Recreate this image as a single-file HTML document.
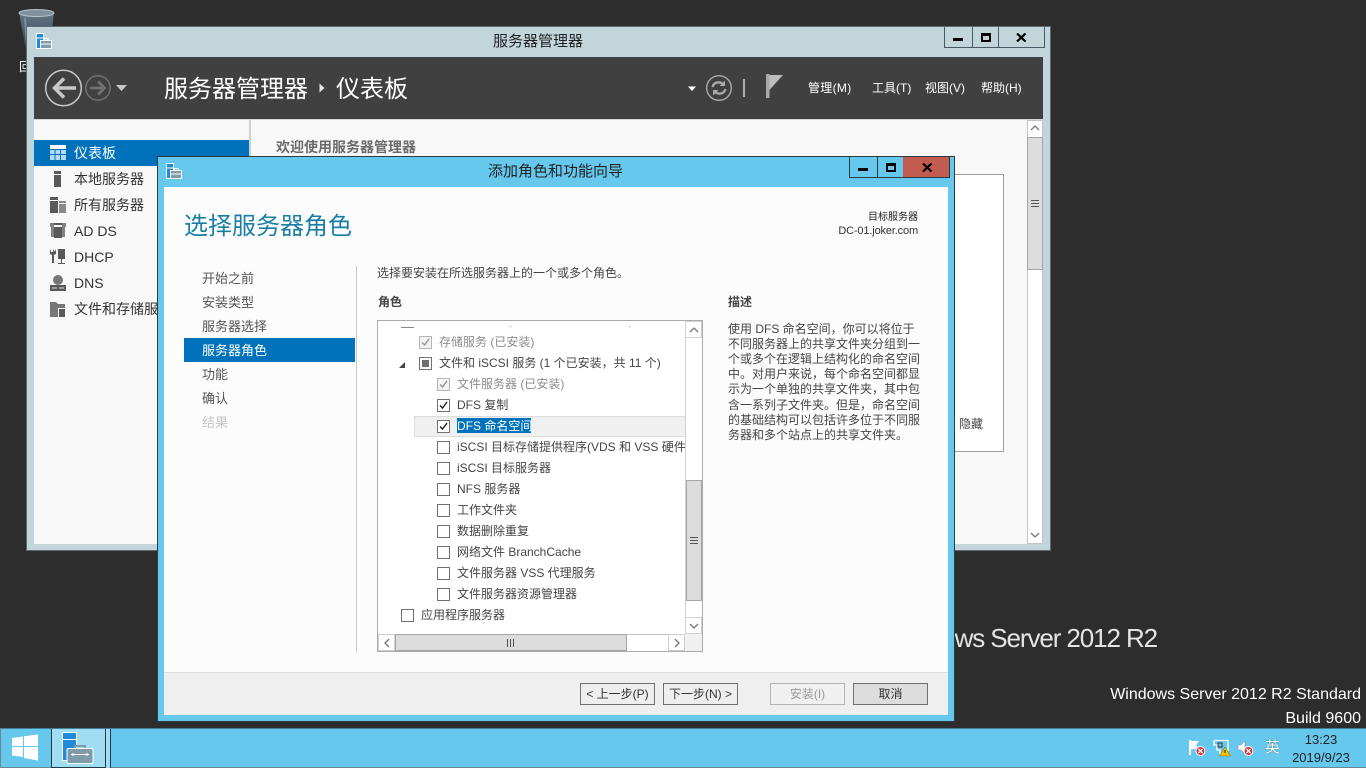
<!DOCTYPE html>
<html lang="zh"><head><meta charset="utf-8"><title>服务器管理器</title>
<style>
*{box-sizing:border-box}
html,body{margin:0;padding:0;width:1366px;height:768px;overflow:hidden;background:#2d2d2d}
body{position:relative;font-family:"Liberation Sans","Noto Sans CJK SC",sans-serif;font-size:12px;color:#333}
.a{position:absolute}
.t{position:absolute;white-space:nowrap;line-height:20px;height:20px}
.nav{font-size:13px;color:#555;left:202px}
.side{font-size:14px;color:#333;left:74px}
.menu{font-size:12px;color:#fff;top:78px}
.cb{position:absolute;width:13px;height:13px;background:#fff;border:1px solid #707070}
.cb.dis{border-color:#b5b5b5;background:#f4f4f4}
.cb svg{position:absolute;left:0;top:0}
.r{position:absolute;white-space:nowrap;font-size:12px;color:#444;line-height:20px;height:20px}
.g{color:#8c8c8c}
.btn{position:absolute;top:683px;height:22px;width:75px;border:1px solid #707070;background:#eee;text-align:center;line-height:21px;font-size:12px;color:#333}
.wb{position:absolute;border:1px solid #4a5a64;border-top:0}
.sb{position:absolute;background:#dcdcdc;border:1px solid #a6a6a6}
.d{position:absolute;left:728px;white-space:nowrap;font-size:12px;color:#444;line-height:15px;height:15px}
</style></head><body>

<!-- recycle bin -->
<svg class="a" style="left:17px;top:8px" width="40" height="52" viewBox="0 0 40 52"><defs><linearGradient id="bin" x1="0" y1="0" x2="0" y2="1"><stop offset="0" stop-color="#66798a"/><stop offset="1" stop-color="#2f3b46"/></linearGradient></defs><path d="M2 4 L37 4 L33 40 L9 43Z" fill="url(#bin)"/><ellipse cx="19.500" cy="5" rx="17.500" ry="3.500" fill="#7f919e" stroke="#b9c3ca"/><path d="M8 10 L10 38" stroke="#7d8f9e" stroke-width="2"/></svg>
<div class="t" style="left:19px;top:57px;color:#fff;font-size:12px">回</div>

<!-- watermark -->
<div class="t" style="right:209px;top:622px;height:32px;line-height:32px;color:#e4e4e4;font-size:26px;letter-spacing:-1.100px">Windows Server 2012 R2</div>
<div class="t" style="right:5px;top:685px;color:#fff;font-size:16px">Windows Server 2012 R2 Standard</div>
<div class="t" style="right:5px;top:709px;color:#fff;font-size:16px">Build 9600</div>

<!-- server manager window -->
<div class="a" style="left:26px;top:26px;width:1025px;height:525px;background:#c2d5db;border:1px solid #5e6b73"></div>
<svg class="a" style="left:36px;top:33px" width="17" height="17" viewBox="0 0 17 17"><rect x="0.500" y="0.500" width="7" height="15" fill="#1f8ad8" stroke="#fff"/><path d="M1 5H7" stroke="#fff"/><rect x="4.500" y="7.500" width="11" height="8" fill="#7f9bac" stroke="#fff"/><path d="M8 7V5.500H12V7M5 11H15" stroke="#fff" fill="none"/></svg>
<div class="t" style="left:493px;top:32px;font-size:15px;color:#222">服务器管理器</div>
<div class="wb" style="left:944px;top:27px;width:29px;height:21px"></div>
<div class="wb" style="left:972px;top:27px;width:27px;height:21px"></div>
<div class="wb" style="left:998px;top:27px;width:47px;height:21px"></div>
<div class="a" style="left:953px;top:38px;width:10px;height:3px;background:#000"></div>
<div class="a" style="left:981px;top:33px;width:10px;height:9px;border:2px solid #000;border-top-width:3px"></div>
<svg class="a" style="left:1016px;top:33px" width="11" height="9" viewBox="0 0 11 9"><path d="M1 0.500L9.500 8.500M9.500 0.500L1 8.500" stroke="#000" stroke-width="2.200"/></svg>

<!-- dark header -->
<div class="a" style="left:34px;top:57px;width:1009px;height:62px;background:#404040"></div>
<div class="a" style="left:34px;top:119px;width:1009px;height:1px;background:#d8d8d8"></div>
<svg class="a" style="left:44px;top:68px" width="40" height="40" viewBox="0 0 40 40"><circle cx="19.500" cy="20" r="17.800" fill="none" stroke="#c8c8c8" stroke-width="1.500"/><path d="M32 20H11M20 10.500L10.500 20L20 29.500" fill="none" stroke="#c8c8c8" stroke-width="3.500"/></svg>
<svg class="a" style="left:84px;top:74px" width="28" height="28" viewBox="0 0 28 28"><circle cx="14" cy="14" r="12.200" fill="none" stroke="#707070" stroke-width="1.500"/><path d="M6 14H20M14 7.500L20.500 14L14 20.500" fill="none" stroke="#707070" stroke-width="2.800"/></svg>
<svg class="a" style="left:116px;top:84px" width="12" height="8"><path d="M0 1H11L5.500 7Z" fill="#c8c8c8"/></svg>
<div class="t" style="left:164px;top:73px;height:34px;line-height:34px;font-size:24px;color:#fff">服务器管理器</div>
<svg class="a" style="left:318px;top:83px" width="8" height="10"><path d="M1.500 0.500L6.500 5L1.500 9.500Z" fill="#e8e8e8"/></svg>
<div class="t" style="left:336px;top:73px;height:34px;line-height:34px;font-size:24px;color:#fff">仪表板</div>
<svg class="a" style="left:688px;top:86px" width="9" height="6"><path d="M0 0.500H8L4 5Z" fill="#fff"/></svg>
<svg class="a" style="left:705px;top:74px" width="28" height="28" viewBox="0 0 28 28"><circle cx="14" cy="14" r="12.300" fill="none" stroke="#aaa" stroke-width="1.400"/><path d="M7.500 13C8.500 9 12.500 7.500 16 8.800L18 10M20.500 15C19.500 19 15.500 20.500 12 19.200L10 18" fill="none" stroke="#aaa" stroke-width="2.300"/><path d="M20 6.500V12H14.500ZM8 21.500V16H13.500Z" fill="#aaa"/></svg>
<div class="a" style="left:743px;top:79px;width:2px;height:18px;background:#b0b0b0"></div>
<svg class="a" style="left:766px;top:74px" width="18" height="25" viewBox="0 0 18 25"><rect x="0" y="0" width="3.500" height="24" fill="#a8a8a8"/><path d="M3.500 1H17L3.500 16Z" fill="#bdbdbd"/></svg>
<div class="t menu" style="left:808px;letter-spacing:.3px">管理(M)</div>
<div class="t menu" style="left:872px">工具(T)</div>
<div class="t menu" style="left:925px">视图(V)</div>
<div class="t menu" style="left:981px">帮助(H)</div>

<!-- back content -->
<div class="a" style="left:34px;top:120px;width:1009px;height:424px;background:#f8f8f8"></div>
<div class="a" style="left:249px;top:120px;width:2px;height:424px;background:#d0d0d0"></div>
<div class="a" style="left:34px;top:140px;width:215px;height:26px;background:#0072bc"></div>
<svg class="a" style="left:50px;top:144px" width="16" height="16" viewBox="0 0 16 16"><rect x="0" y="1" width="16" height="4" fill="#fff"/><path d="M0 6H4.500V10H0ZM5.500 6H10V10H5.500ZM11 6H16V10H11ZM0 11H4.500V16H0ZM5.500 11H10V16H5.500ZM11 11H16V16H11Z" fill="#b6d9ef"/></svg>
<div class="t side" style="top:143px;color:#fff">仪表板</div>
<svg class="a" style="left:50px;top:170px" width="16" height="18" viewBox="0 0 16 18"><path d="M4 1H11V4H4ZM4 5H11V17H4Z" fill="#595959"/></svg>
<div class="t side" style="top:169px">本地服务器</div>
<svg class="a" style="left:50px;top:196px" width="16" height="18" viewBox="0 0 16 18"><path d="M0 1H8V4H0ZM0 5H8V17H0Z" fill="#595959"/><path d="M9 5H16V7H9ZM9 8H16V17H9Z" fill="#8a8a8a"/></svg>
<div class="t side" style="top:195px">所有服务器</div>
<svg class="a" style="left:50px;top:222px" width="16" height="18" viewBox="0 0 16 18"><path d="M0 1H4V15H1V5H0ZM12 1H16V5H15V15H12Z" fill="#808080"/><path d="M4 1H12V3H4ZM4 5H12V16H4Z" fill="#595959"/></svg>
<div class="t side" style="top:221px">AD DS</div>
<svg class="a" style="left:50px;top:248px" width="16" height="18" viewBox="0 0 16 18"><path d="M3 1V4H1V1L0 3V6L2 7V15H4V7L6 6V3L5 1V4" fill="#595959"/><path d="M8 1H15V11H8ZM11 11H12V15H15V16H8V15H11Z" fill="#595959"/></svg>
<div class="t side" style="top:247px">DHCP</div>
<svg class="a" style="left:50px;top:274px" width="16" height="18" viewBox="0 0 16 18"><circle cx="8" cy="6" r="5" fill="#777"/><path d="M0 11H16V17H0Z" fill="#595959"/><path d="M2 14H7M9 14H14" stroke="#ddd"/></svg>
<div class="t side" style="top:273px">DNS</div>
<svg class="a" style="left:50px;top:300px" width="16" height="18" viewBox="0 0 16 18"><path d="M0 2H6L8 4H15V8H8V17H0Z" fill="#777"/><path d="M9 9H15V17H9Z" fill="#595959"/></svg>
<div class="t side" style="top:299px">文件和存储服</div>
<div class="t" style="left:276px;top:137px;font-size:14px;color:#6b6b6b;font-weight:bold">欢迎使用服务器管理器</div>
<div class="a" style="left:940px;top:174px;width:64px;height:278px;background:#fff;border:1px solid #a0a0a0;border-left:0"></div>
<div class="t" style="left:959px;top:414px;color:#444">隐藏</div>

<!-- back scrollbar -->
<div class="a" style="left:1027px;top:120px;width:16px;height:424px;background:#fff;border:1px solid #c4c4c4"></div>
<div class="sb" style="left:1027px;top:137px;width:16px;height:133px"></div>
<svg class="a" style="left:1030px;top:124px" width="10" height="8"><path d="M1 6L5 2L9 6" fill="none" stroke="#777" stroke-width="1.300"/></svg>
<svg class="a" style="left:1030px;top:531px" width="10" height="8"><path d="M1 2L5 6L9 2" fill="none" stroke="#777" stroke-width="1.300"/></svg>
<div class="a" style="left:1031px;top:200px;width:8px;height:7px;border-top:1px solid #555;border-bottom:1px solid #555"></div>
<div class="a" style="left:1031px;top:203px;width:8px;height:1px;background:#555"></div>

<!-- dialog -->
<div class="a" style="left:157px;top:156px;width:798px;height:566px;background:#65c8ec;border:1px solid #2b3a44"></div>
<svg class="a" style="left:166px;top:163px" width="17" height="17" viewBox="0 0 17 17"><rect x="0.500" y="0.500" width="7" height="15" fill="#1f8ad8" stroke="#fff"/><path d="M1 5H7" stroke="#fff"/><rect x="4.500" y="7.500" width="11" height="8" fill="#7f9bac" stroke="#fff"/><path d="M8 7V5.500H12V7M5 11H15" stroke="#fff" fill="none"/></svg>
<div class="t" style="left:488px;top:162px;font-size:15px;color:#222">添加角色和功能向导</div>
<div class="a" style="left:849px;top:157px;width:29px;height:21px;border:1px solid #2b3a44;border-top:0"></div>
<div class="a" style="left:877px;top:157px;width:27px;height:21px;border:1px solid #2b3a44;border-top:0"></div>
<div class="a" style="left:903px;top:157px;width:47px;height:21px;background:#c25b50;border:1px solid #2b3a44;border-top:0;border-left:0"></div>
<div class="a" style="left:858px;top:168px;width:10px;height:3px;background:#000"></div>
<div class="a" style="left:886px;top:163px;width:10px;height:9px;border:2px solid #000;border-top-width:3px"></div>
<svg class="a" style="left:922px;top:163px" width="11" height="9" viewBox="0 0 11 9"><path d="M1 0.500L9.500 8.500M9.500 0.500L1 8.500" stroke="#000" stroke-width="2.200"/></svg>

<div class="a" style="left:164px;top:187px;width:784px;height:528px;background:#fcfcfc"></div>
<div class="a" style="left:164px;top:672px;width:784px;height:43px;background:#efefef;border-top:1px solid #dcdcdc"></div>
<div class="t" style="left:184px;top:210px;height:34px;line-height:34px;font-size:24px;color:#1a7fa5">选择服务器角色</div>
<div class="t" style="right:448px;top:208px;font-size:10px;color:#222">目标服务器</div>
<div class="t" style="right:448px;top:221px;font-size:11px;letter-spacing:-.15px;color:#333">DC-01.joker.com</div>

<!-- wizard nav -->
<div class="a" style="left:184px;top:338px;width:171px;height:24px;background:#0072bc"></div>
<div class="t nav" style="top:269px">开始之前</div>
<div class="t nav" style="top:293px">安装类型</div>
<div class="t nav" style="top:317px">服务器选择</div>
<div class="t nav" style="top:341px;color:#fff">服务器角色</div>
<div class="t nav" style="top:365px">功能</div>
<div class="t nav" style="top:389px">确认</div>
<div class="t nav" style="top:413px;color:#c4c4c4">结果</div>
<div class="a" style="left:356px;top:266px;width:1px;height:386px;background:#c8c8c8"></div>

<div class="t" style="left:377px;top:263px;color:#444">选择要安装在所选服务器上的一个或多个角色。</div>
<div class="t" style="left:378px;top:292px;color:#444;font-weight:bold">角色</div>
<div class="t" style="left:728px;top:292px;color:#444;font-weight:bold">描述</div>

<!-- list -->
<div class="a" style="left:377px;top:320px;width:326px;height:332px;background:#fff;border:1px solid #ababab"></div>
<div class="a" style="left:401px;top:327px;width:13px;height:1px;background:#888"></div>
<div class="a" style="left:510px;top:326px;width:1px;height:1px;background:#aaa"></div>
<div class="a" style="left:629px;top:326px;width:1px;height:1px;background:#aaa"></div>

<div class="a" style="left:414px;top:416px;width:271px;height:21px;background:#f0f0f0;border:1px solid #dcdcdc;border-right:0"></div>
<div class="a" style="left:457px;top:418px;width:74px;height:15px;background:#0072bc"></div>

<div class="cb dis" style="left:419px;top:336px"><svg width="11" height="11"><path d="M2 5.500L4.500 8L9 2" fill="none" stroke="#9a9a9a" stroke-width="1.500"/></svg></div>
<div class="r g" style="left:439px;top:332px">存储服务 (已安装)</div>
<svg class="a" style="left:398px;top:361px" width="8" height="8"><path d="M7 1V7H1Z" fill="#444"/></svg>
<div class="cb" style="left:419px;top:357px"><div class="a" style="left:2px;top:2px;width:7px;height:7px;background:#707070"></div></div>
<div class="r" style="left:439px;top:353px">文件和 iSCSI 服务 (1 个已安装，共 11 个)</div>
<div class="cb dis" style="left:437px;top:378px"><svg width="11" height="11"><path d="M2 5.500L4.500 8L9 2" fill="none" stroke="#9a9a9a" stroke-width="1.500"/></svg></div>
<div class="r g" style="left:457px;top:374px">文件服务器 (已安装)</div>
<div class="cb" style="left:437px;top:399px"><svg width="11" height="11"><path d="M2 5.500L4.500 8L9 2" fill="none" stroke="#222" stroke-width="1.400"/></svg></div>
<div class="r" style="left:457px;top:395px">DFS 复制</div>
<div class="cb" style="left:437px;top:420px"><svg width="11" height="11"><path d="M2 5.500L4.500 8L9 2" fill="none" stroke="#222" stroke-width="1.400"/></svg></div>
<div class="r" style="left:457px;top:416px;color:#fff">DFS 命名空间</div>
<div class="cb" style="left:437px;top:441px"></div>
<div class="r" style="left:457px;top:437px;width:228px;overflow:hidden">iSCSI 目标存储提供程序(VDS 和 VSS 硬件提供程序)</div>
<div class="cb" style="left:437px;top:462px"></div>
<div class="r" style="left:457px;top:458px">iSCSI 目标服务器</div>
<div class="cb" style="left:437px;top:483px"></div>
<div class="r" style="left:457px;top:479px">NFS 服务器</div>
<div class="cb" style="left:437px;top:504px"></div>
<div class="r" style="left:457px;top:500px">工作文件夹</div>
<div class="cb" style="left:437px;top:525px"></div>
<div class="r" style="left:457px;top:521px">数据删除重复</div>
<div class="cb" style="left:437px;top:546px"></div>
<div class="r" style="left:457px;top:542px">网络文件 BranchCache</div>
<div class="cb" style="left:437px;top:567px"></div>
<div class="r" style="left:457px;top:563px">文件服务器 VSS 代理服务</div>
<div class="cb" style="left:437px;top:588px"></div>
<div class="r" style="left:457px;top:584px">文件服务器资源管理器</div>
<div class="cb" style="left:401px;top:609px"></div>
<div class="r" style="left:421px;top:605px">应用程序服务器</div>

<!-- list scrollbars -->
<div class="a" style="left:685px;top:321px;width:17px;height:313px;background:#fff;border-left:1px solid #d0d0d0"></div>
<div class="a" style="left:685px;top:321px;width:17px;height:17px;border:1px solid #d0d0d0;background:#fff"></div>
<div class="a" style="left:685px;top:617px;width:17px;height:17px;border:1px solid #d0d0d0;background:#fff"></div>
<div class="sb" style="left:686px;top:480px;width:16px;height:121px"></div>
<svg class="a" style="left:689px;top:326px" width="10" height="8"><path d="M1 6L5 2L9 6" fill="none" stroke="#777" stroke-width="1.300"/></svg>
<svg class="a" style="left:689px;top:622px" width="10" height="8"><path d="M1 2L5 6L9 2" fill="none" stroke="#777" stroke-width="1.300"/></svg>
<div class="a" style="left:690px;top:537px;width:8px;height:7px;border-top:1px solid #555;border-bottom:1px solid #555"></div>
<div class="a" style="left:690px;top:540px;width:8px;height:1px;background:#555"></div>

<div class="a" style="left:378px;top:634px;width:324px;height:17px;background:#fff;border-top:1px solid #c0c0c0"></div>
<div class="a" style="left:378px;top:634px;width:17px;height:17px;background:#fff;border:1px solid #d0d0d0"></div>
<div class="sb" style="left:395px;top:634px;width:232px;height:17px"></div>
<div class="a" style="left:668px;top:634px;width:17px;height:17px;background:#fff;border:1px solid #d0d0d0"></div>
<div class="a" style="left:685px;top:634px;width:17px;height:17px;background:#f0f0f0"></div>
<svg class="a" style="left:383px;top:638px" width="8" height="10"><path d="M6 1L2 5L6 9" fill="none" stroke="#777" stroke-width="1.300"/></svg>
<svg class="a" style="left:673px;top:638px" width="8" height="10"><path d="M2 1L6 5L2 9" fill="none" stroke="#777" stroke-width="1.300"/></svg>
<div class="a" style="left:507px;top:639px;width:7px;height:8px;border-left:1px solid #555;border-right:1px solid #555"></div>
<div class="a" style="left:510px;top:639px;width:1px;height:8px;background:#555"></div>

<!-- description -->
<div class="d" style="top:322px">使用 DFS 命名空间，你可以将位于</div>
<div class="d" style="top:337px">不同服务器上的共享文件夹分组到一</div>
<div class="d" style="top:352px">个或多个在逻辑上结构化的命名空间</div>
<div class="d" style="top:367px">中。对用户来说，每个命名空间都显</div>
<div class="d" style="top:382px">示为一个单独的共享文件夹，其中包</div>
<div class="d" style="top:398px">含一系列子文件夹。但是，命名空间</div>
<div class="d" style="top:413px">的基础结构可以包括许多位于不同服</div>
<div class="d" style="top:428px">务器和多个站点上的共享文件夹。</div>

<!-- buttons -->
<div class="btn" style="left:580px">&lt; 上一步(P)</div>
<div class="btn" style="left:663px">下一步(N) &gt;</div>
<div class="btn" style="left:770px;border-color:#b0b6b8;color:#9a9a9a;background:#f0f0f0">安装(I)</div>
<div class="btn" style="left:853px;background:#dddddd">取消</div>

<!-- taskbar -->
<div class="a" style="left:0;top:728px;width:1366px;height:40px;background:#65c8ec;border-top:1px solid #3f7f99;border-left:1px solid #6b8894;border-bottom:1px solid #6b8894"></div>
<svg class="a" style="left:11px;top:733px" width="28" height="29" viewBox="0 0 28 29"><path d="M1 5L12 3.500V13H1ZM13 3.300L27 1.500V13H13ZM1 14H12V24L1 22.500ZM13 14H27V27.500L13 25Z" fill="#fff"/></svg>
<div class="a" style="left:51px;top:729px;width:55px;height:39px;background:#a2dcf3;border-left:1px solid #1f3a48;border-right:1px solid #1f3a48;border-bottom:1px solid #1f3a48"></div>
<div class="a" style="left:105px;top:729px;width:6px;height:39px;background:#a2dcf3;border-right:1px solid #1f3a48;border-left:1px solid #1f3a48"></div>
<svg class="a" style="left:61px;top:732px" width="34" height="34" viewBox="0 0 34 34"><rect x="1.500" y="0.500" width="14" height="28" fill="#1f8ad8" stroke="#fff"/><path d="M1.500 7.500H15.500" stroke="#fff"/><path d="M14 17V14H24V17" fill="none" stroke="#7f9bac" stroke-width="2"/><rect x="6" y="16.500" width="26" height="15" rx="1.500" fill="#7f9bac" stroke="#fff"/><path d="M10 22.500H28M12 21V24M26 21V24" stroke="#fff"/></svg>

<!-- tray -->
<svg class="a" style="left:1188px;top:739px" width="18" height="18" viewBox="0 0 18 18"><path d="M2 1V16" stroke="#fff" stroke-width="2"/><path d="M3 2H11L8 6L11 10H3Z" fill="#fff"/><circle cx="12.500" cy="12" r="4.500" fill="#d8333a" stroke="#fff"/><path d="M10.500 10L14.500 14M14.500 10L10.500 14" stroke="#fff" stroke-width="1.300"/></svg>
<svg class="a" style="left:1213px;top:739px" width="18" height="18" viewBox="0 0 18 18"><path d="M1 1.500H15V12M1 1.500V6H4V11H7V15" fill="none" stroke="#fff" stroke-width="1.300"/><path d="M5 4H9V8H5Z" fill="none" stroke="#333"/><path d="M12 8L17.500 17H6.500Z" fill="#f2c200" stroke="#7a6500" stroke-width=".5"/><path d="M12 11V14" stroke="#222"/></svg>
<svg class="a" style="left:1237px;top:739px" width="18" height="18" viewBox="0 0 18 18"><path d="M1 6H4L8 2V15L4 11H1Z" fill="#fff" stroke="#888" stroke-width=".5"/><circle cx="11.500" cy="12" r="4.500" fill="#d8333a" stroke="#fff"/><path d="M9.500 10L13.500 14M13.500 10L9.500 14" stroke="#fff" stroke-width="1.300"/></svg>
<div class="t" style="left:1265px;top:738px;font-size:15px;color:#fff;text-shadow:0 0 1px #333">英</div>
<div class="t" style="left:1290px;width:62px;text-align:center;top:730px;font-size:13px;color:#222">13:23</div>
<div class="t" style="left:1290px;width:62px;text-align:center;top:748px;font-size:13px;color:#222">2019/9/23</div>
</body></html>
